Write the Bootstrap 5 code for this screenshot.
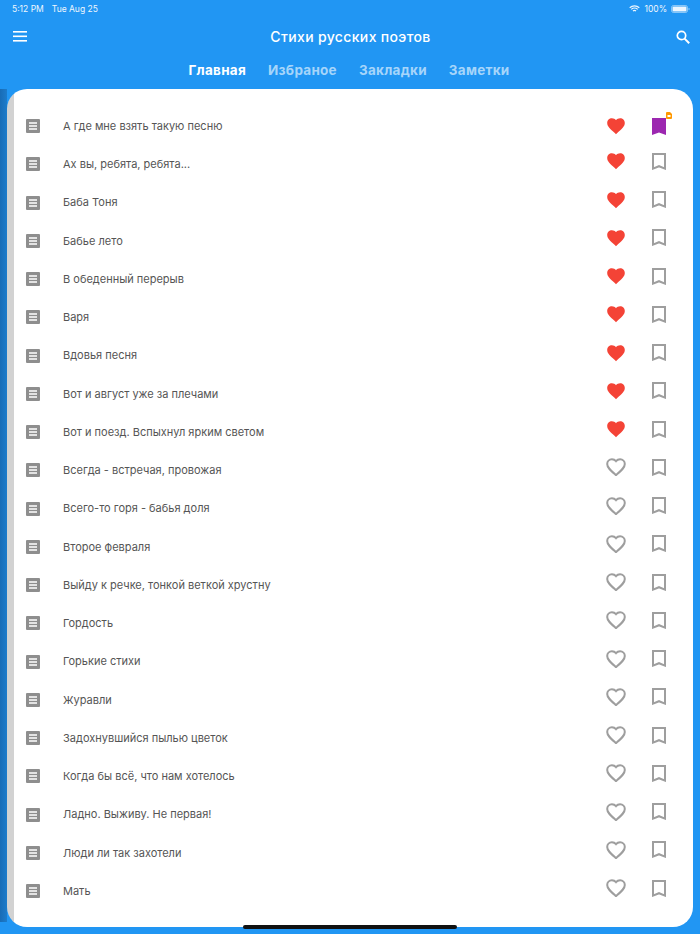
<!DOCTYPE html>
<html lang="ru">
<head>
    <meta charset="UTF-8">
    <meta name="viewport" content="width=device-width, initial-scale=1.0">
    <title>Стихи русских поэтов</title>
    <link href="https://cdn.jsdelivr.net/npm/bootstrap@5.3.2/dist/css/bootstrap.min.css" rel="stylesheet">
    <style>
        body {
            background-color: #2196f3;
            font-family: Inter, Roboto, sans-serif;
            height: 934px;
            overflow: hidden;
        }
        .status-line {
            height: 18px;
            padding: 0 10px 0 12px;
            color: #fff;
            font-size: 8.5px;
            opacity: .92;
        }
        .title-line {
            height: 37px;
            padding: 0 10px 0 13px;
            color: #fff;
        }
        .app-title {
            font-size: 14px;
            font-weight: 500;
            letter-spacing: .35px;
            margin-right: 2px;
        }
        .tab-line {
            height: 34px;
            gap: 22px;
            font-size: 13.5px;
            font-weight: 700;
            letter-spacing: .27px;
            color: #a6d5fa;
            padding: 0 2px 3px 0;
        }
        .tab-line .is-active {
            color: #fff;
        }
        .sheet-wrap {
            height: 838px;
            background: linear-gradient(to right, #186cb6, #1d7ccb 7px, transparent 7px);
            background-size: 100% 833px;
            background-repeat: no-repeat;
            padding: 0 7px;
        }
        .sheet {
            height: 838px;
            background: linear-gradient(to right, #d2d2d2 7px, #fff 7px);
            border-radius: 20px;
            overflow: hidden;
            padding-top: 18px;
        }
        .poem-row {
            height: 38.25px;
            padding-left: 19px;
            color: #555;
            font-size: 11px;
        }
        .poem-name {
            margin-left: 23px;
        }
        .icon-box {
            margin-bottom: 6px;
        }
        .poem-row.first-row .icon-box {
            margin-bottom: 0;
        }
        .heart-box {
            width: 20px;
            margin-right: 26px;
        }
        .mark-box {
            width: 14px;
            margin-right: 27px;
            position: relative;
        }
        .note-flag {
            position: absolute;
            top: -6px;
            right: -6px;
        }
        .home-bar {
            position: absolute;
            left: 243px;
            top: 925px;
            width: 214px;
            height: 4px;
            border-radius: 2px;
            background: #111;
        }
    </style>
</head>
<body>
    <div class="status-line d-flex align-items-center justify-content-between">
        <div class="d-flex gap-2"><span>5:12 PM</span><span>Tue Aug 25</span></div>
        <div class="d-flex align-items-center gap-1">
            <svg width="11" height="8" viewBox="0 0 11 8" fill="none" stroke="#fff" stroke-width="1.2"><path d="M.7 2.7a7 7 0 0 1 9.6 0M2.3 4.4a4.7 4.7 0 0 1 6.4 0M4 6a2.2 2.2 0 0 1 3 0"/></svg>
            <span>100%</span>
            <svg width="19" height="8" viewBox="0 0 19 8"><rect x=".5" y=".5" width="16" height="7" rx="2" fill="none" stroke="#fff" stroke-opacity=".5"/><rect x="1.5" y="1.5" width="14" height="5" rx="1" fill="#fff"/><rect x="17.5" y="3" width="1" height="2" fill="#fff" fill-opacity=".5"/></svg>
        </div>
    </div>
    <div class="title-line d-flex align-items-center justify-content-between">
        <svg width="14" height="11" viewBox="0 0 14 11" fill="#fff"><rect y="0" width="14" height="1.6"/><rect y="4.5" width="14" height="1.6"/><rect y="9" width="14" height="1.6"/></svg>
        <span class="app-title">Стихи русских поэтов</span>
        <svg width="14" height="14" viewBox="0 0 14 14" fill="none" stroke="#fff" stroke-width="1.7"><circle cx="5.5" cy="5.5" r="4.2"/><path d="M8.6 8.6 13.2 13.2" stroke-width="2"/></svg>
    </div>
    <div class="tab-line d-flex align-items-center justify-content-center">
        <span class="is-active">Главная</span><span>Избраное</span><span>Закладки</span><span>Заметки</span>
    </div>
    <div class="sheet-wrap">
        <div class="sheet" id="poemList"></div>
    </div>
    <div class="home-bar"></div>

    <script>
        const poems = ['А где мне взять такую песню', 'Ах вы, ребята, ребята...', 'Баба Тоня', 'Бабье лето', 'В обеденный перерыв', 'Варя', 'Вдовья песня', 'Вот и август уже за плечами', 'Вот и поезд. Вспыхнул ярким светом', 'Всегда - встречая, провожая', 'Всего-то горя - бабья доля', 'Второе февраля', 'Выйду к речке, тонкой веткой хрустну', 'Гордость', 'Горькие стихи', 'Журавли', 'Задохнувшийся пылью цветок', 'Когда бы всё, что нам хотелось', 'Ладно. Выживу. Не первая!', 'Люди ли так захотели', 'Мать'];
        const heartPath = 'M10 17.2 8.8 16.1C4.2 12 1.2 9.3 1.2 6 1.2 3.3 3.3 1.3 5.9 1.3c1.6 0 3.1.7 4.1 1.9 1-1.2 2.5-1.9 4.1-1.9 2.6 0 4.7 2 4.7 4.7 0 3.3-3 6-7.6 10.1z';
        const docIcon = '<svg width="14" height="14" viewBox="0 0 14 14"><rect width="14" height="14" rx="1" fill="#8e8e8e"/><path d="M3 4h8M3 7h8M3 10h8" stroke="#fff" stroke-width="1.4"/></svg>';
        const list = document.getElementById('poemList');
        poems.forEach(function(name, i) {
            const liked = i < 9;
            const heart = liked
                ? `<svg width="20" height="18" viewBox="0 0 20 18"><path d="${heartPath}" fill="#f44336"/></svg>`
                : `<svg width="20" height="18" viewBox="0 0 20 18"><path d="${heartPath}" fill="none" stroke="#9e9e9e" stroke-width="2"/></svg>`;
            const mark = i === 0
                ? `<svg width="14" height="17" viewBox="0 0 14 17"><path d="M0 0h14v17l-7-2.6L0 17z" fill="#9c27b0"/></svg>
                   <svg class="note-flag" width="6" height="7" viewBox="0 0 6 7"><path d="M0 1a1 1 0 0 1 1-1h3l2 2v4a1 1 0 0 1-1 1H1a1 1 0 0 1-1-1z" fill="#ff9800"/><rect x="1.5" y="3" width="3" height="2" fill="#fff"/></svg>`
                : `<svg width="14" height="17" viewBox="0 0 14 17"><path d="M1 1h12v14.6l-6-2.4-6 2.4z" fill="none" stroke="#9e9e9e" stroke-width="2"/></svg>`;
            list.insertAdjacentHTML('beforeend', `
                <div class="poem-row d-flex align-items-center ${i === 0 ? 'first-row' : ''}">
                    <div class="d-flex">${docIcon}</div>
                    <div class="poem-name flex-grow-1">${name}</div>
                    <div class="icon-box heart-box d-flex">${heart}</div>
                    <div class="icon-box mark-box d-flex">${mark}</div>
                </div>`);
        });
    </script>
    <script src="https://cdn.jsdelivr.net/npm/bootstrap@5.3.2/dist/js/bootstrap.bundle.min.js"></script>
</body>
</html>
